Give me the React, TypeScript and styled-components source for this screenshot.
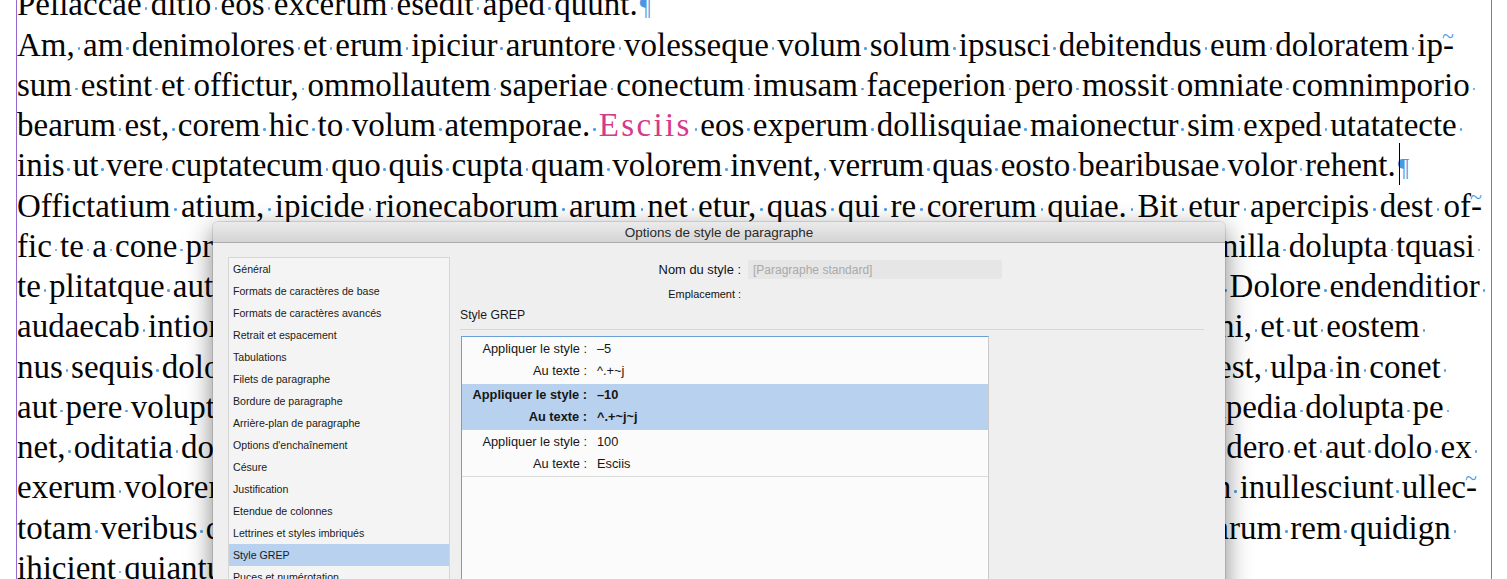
import React from "react";
import styled, { createGlobalStyle } from "styled-components";

const GlobalStyle = createGlobalStyle`
  html, body { margin: 0; padding: 0; background: #ffffff; overflow: hidden; }
  #root { width: 1507px; height: 579px; }
`;

const Page = styled.div`
  position: relative;
  width: 1507px;
  height: 579px;
  overflow: hidden;
  background: #ffffff;
`;

const Frame = styled.div`
  margin-left: 16px;
  width: 1474px;
  height: 579px;
  border-left: 1px solid #9569d0;
  border-right: 1px solid #9569d0;
  overflow: hidden;
`;

const Lines = styled.div`
  margin-top: -15.6px;
  font-family: "Liberation Serif", "Times New Roman", serif;
  font-size: 33px;
  line-height: 40.25px;
  color: #050505;
`;

const Line = styled.div<{ $w?: number }>`
  display: flex;
  height: 40.25px;
  width: ${(p) => (p.$w ? `${p.$w}px` : "100%")};
  white-space: nowrap;
`;

const Group = styled.div`
  display: flex;
  flex: none;
`;

const Filler = styled.div`
  flex: 1 1 auto;
`;

const Word = styled.span<{ $pink?: boolean }>`
  flex: none;
  color: ${(p) => (p.$pink ? "#d43a8c" : "inherit")};
  letter-spacing: ${(p) => (p.$pink ? "2.4px" : "normal")};
`;

const Sp = styled.span<{ $fixed?: boolean }>`
  position: relative;
  flex: ${(p) => (p.$fixed ? "0 0 8.25px" : "1 1 8.25px")};
  min-width: 3px;
  &::after {
    content: "";
    position: absolute;
    left: 50%;
    top: 22.8px;
    width: 2.6px;
    height: 2.6px;
    margin-left: -1.3px;
    border-radius: 50%;
    background: #4f9fe6;
  }
`;

const Hyphen = styled.span`
  position: relative;
  flex: none;
  &::after {
    content: "~";
    position: absolute;
    left: -1px;
    top: -9px;
    font-size: 22px;
    color: #4f9be4;
  }
`;

const Mark = styled.span<{ $caret?: boolean }>`
  position: relative;
  flex: none;
  color: #4a97e3;
  &::before {
    content: "";
    display: ${(p) => (p.$caret ? "block" : "none")};
    position: absolute;
    left: 3px;
    top: -2px;
    width: 1px;
    height: 42px;
    background: #000;
  }
`;

const Glyph = styled.span`
  font-size: 25px;
  line-height: 1;
  margin-left: 2px;
`;

/* ---------- dialog ---------- */

const Dialog = styled.div`
  position: absolute;
  left: 213px;
  top: 222px;
  width: 1012px;
  height: 420px;
  display: flex;
  flex-direction: column;
  background: #efefef;
  border-radius: 5px 5px 0 0;
  box-shadow: 0 8px 26px rgba(0, 0, 0, 0.5), 0 0 0 1px rgba(0, 0, 0, 0.1);
  font-family: "Liberation Sans", Arial, sans-serif;
  color: #1d1d1d;
`;

const TitleBar = styled.div`
  flex: none;
  height: 20px;
  display: flex;
  align-items: center;
  justify-content: center;
  border-bottom: 1px solid #ababab;
  border-radius: 5px 5px 0 0;
  background: linear-gradient(#ebebeb, #d4d4d4);
  font-size: 13.5px;
  color: #2a2a2a;
`;

const Body = styled.div`
  flex: 1;
  display: flex;
  gap: 10px;
  padding: 14px 21px 0 15px;
  min-height: 0;
`;

const Sidebar = styled.div`
  flex: none;
  width: 220px;
  border: 1px solid #d6d6d6;
  border-bottom: none;
  background: #f4f4f4;
`;

const NavItem = styled.div<{ $sel?: boolean }>`
  height: 22px;
  display: flex;
  align-items: center;
  padding-left: 4px;
  font-size: 10.6px;
  color: #1a1a1a;
  background: ${(p) => (p.$sel ? "#b7d1ee" : "transparent")};
`;

const Main = styled.div`
  flex: 1;
  display: flex;
  flex-direction: column;
  padding-top: 3px;
  min-width: 0;
`;

const FieldRow = styled.div<{ $gapTop?: number }>`
  display: grid;
  grid-template-columns: 281px 254px;
  column-gap: 7px;
  align-items: center;
  height: 19px;
  margin-top: ${(p) => p.$gapTop ?? 0}px;
`;

const FieldLabel = styled.div<{ $small?: boolean }>`
  text-align: right;
  font-size: ${(p) => (p.$small ? "10.9px" : "12.9px")};
  color: #111;
`;

const Input = styled.div`
  height: 19px;
  display: flex;
  align-items: center;
  padding-left: 5px;
  border-radius: 2px;
  background: #e6e6e6;
  font-size: 12px;
  color: #a9a9a9;
`;

const SectionTitle = styled.div`
  height: 20px;
  margin-top: 2px;
  display: flex;
  align-items: center;
  font-size: 12.2px;
  color: #1a1a1a;
`;

const Rule = styled.div`
  height: 1px;
  margin-top: 4px;
  background: #d8d8d8;
`;

const GrepList = styled.div`
  flex: 1;
  margin: 6px 0 0 1px;
  width: 526px;
  background: #fbfbfb;
  border-top: 1px solid #6b9fd8;
  border-left: 1px solid #6b9fd8;
  border-right: 1px solid #c9c9c9;
`;

const GrepRow = styled.div<{ $sel?: boolean; $last?: boolean }>`
  height: 46.5px;
  box-sizing: border-box;
  background: ${(p) => (p.$sel ? "#b7d1ee" : "transparent")};
  font-weight: ${(p) => (p.$sel ? 700 : 400)};
  border-bottom: ${(p) => (p.$last ? "1px solid #dadada" : "none")};
`;

const GrepLine = styled.div`
  display: grid;
  grid-template-columns: 125px auto;
  column-gap: 10px;
  align-items: center;
  height: 22px;
  font-size: 12.8px;
  color: #161616;
`;

const GrepLabel = styled.div`
  text-align: right;
  white-space: nowrap;
`;

/* ---------- data ---------- */

type FullLine = { w: number; text: string; caret?: boolean };
type SplitLine = { w?: number; left: string; right?: string };

const fullLines: FullLine[] = [
  { w: 634, text: "Pellaccae ditio eos excerum esedit aped quunt.¶" },
  { w: 1437, text: "Am, am denimolores et erum ipiciur aruntore volesseque volum solum ipsusci debitendus eum doloratem ip-~" },
  { w: 1461, text: "sum estint et offictur, ommollautem saperiae conectum imusam faceperion pero mossit omniate comnimporio " },
  { w: 1448, text: "bearum est, corem hic to volum atemporae. {Esciis} eos experum dollisquiae maionectur sim exped utatatecte " },
  { w: 1392, text: "inis ut vere cuptatecum quo quis cupta quam volorem invent, verrum quas eosto bearibusae volor rehent.¶", caret: true },
  { w: 1465, text: "Offictatium atium, ipicide rionecaborum arum net etur, quas qui re corerum quiae. Bit etur apercipis dest of-~" },
];

const splitLines: SplitLine[] = [
  { w: 1466, left: "fic te a cone preped quiatur", right: "volupta nilla dolupta tquasi " },
  { w: 1471, left: "te plitatque aut faccus", right: "ut Dolore endenditior " },
  { w: 1411, left: "audaecab intiorem", right: "omni, et ut eostem " },
  { w: 1432, left: "nus sequis dolorro", right: "quest, ulpa in conet " },
  { w: 1435, left: "aut pere voluptas", right: "expedia dolupta pe " },
  { w: 1463, left: "net, oditatia dolores", right: "quo dero et aut dolo ex " },
  { w: 1460, left: "exerum volorem", right: "quisin inullesciunt ullec-~" },
  { w: 1442, left: "totam veribus quam", right: "quarum rem quidign " },
  { left: "ihicient quiantur" },
];

const navItems = [
  "Général",
  "Formats de caractères de base",
  "Formats de caractères avancés",
  "Retrait et espacement",
  "Tabulations",
  "Filets de paragraphe",
  "Bordure de paragraphe",
  "Arrière-plan de paragraphe",
  "Options d'enchaînement",
  "Césure",
  "Justification",
  "Etendue de colonnes",
  "Lettrines et styles imbriqués",
  "Style GREP",
  "Puces et numérotation",
];

const grepRules = [
  { style: "–5", text: "^.+~j" },
  { style: "–10", text: "^.+~j~j", sel: true },
  { style: "100", text: "Esciis" },
];

/* ---------- rendering ---------- */

function renderToken(tok: string, key: string, caret?: boolean) {
  if (tok.endsWith("¶")) {
    return (
      <React.Fragment key={key}>
        <Word>{tok.slice(0, -1)}</Word>
        <Mark $caret={caret}>
          <Glyph>¶</Glyph>
        </Mark>
      </React.Fragment>
    );
  }
  if (tok.endsWith("-~")) {
    return (
      <React.Fragment key={key}>
        <Word>{tok.slice(0, -2)}</Word>
        <Hyphen>-</Hyphen>
      </React.Fragment>
    );
  }
  if (tok.startsWith("{") && tok.endsWith("}")) {
    return (
      <Word key={key} $pink>
        {tok.slice(1, -1)}
      </Word>
    );
  }
  return <Word key={key}>{tok}</Word>;
}

function renderWords(text: string, fixed: boolean, caret?: boolean) {
  const trailing = text.endsWith(" ");
  const toks = text.trim().split(" ");
  const out: React.ReactNode[] = [];
  toks.forEach((t, i) => {
    out.push(renderToken(t, `w${i}`, caret));
    if (i < toks.length - 1) out.push(<Sp key={`s${i}`} $fixed={fixed} />);
  });
  if (trailing) out.push(<Sp key="trail" $fixed />);
  return out;
}

export default function App() {
  return (
    <>
      <GlobalStyle />
      <Page>
        <Frame>
          <Lines>
            {fullLines.map((l, i) => (
              <Line key={`f${i}`} $w={l.w}>
                {renderWords(l.text, false, l.caret)}
              </Line>
            ))}
            {splitLines.map((l, i) => (
              <Line key={`s${i}`} $w={l.w}>
                <Group>{renderWords(l.left, true)}</Group>
                <Filler />
                {l.right && <Group>{renderWords(l.right, true)}</Group>}
              </Line>
            ))}
          </Lines>
        </Frame>

        <Dialog>
          <TitleBar>Options de style de paragraphe</TitleBar>
          <Body>
            <Sidebar>
              {navItems.map((n) => (
                <NavItem key={n} $sel={n === "Style GREP"}>
                  {n}
                </NavItem>
              ))}
            </Sidebar>
            <Main>
              <FieldRow>
                <FieldLabel>Nom du style :</FieldLabel>
                <Input>[Paragraphe standard]</Input>
              </FieldRow>
              <FieldRow $gapTop={5}>
                <FieldLabel $small>Emplacement :</FieldLabel>
                <span />
              </FieldRow>
              <SectionTitle>Style GREP</SectionTitle>
              <Rule />
              <GrepList>
                {grepRules.map((r, i) => (
                  <GrepRow key={i} $sel={r.sel} $last={i === grepRules.length - 1}>
                    <GrepLine>
                      <GrepLabel>Appliquer le style :</GrepLabel>
                      <span>{r.style}</span>
                    </GrepLine>
                    <GrepLine>
                      <GrepLabel>Au texte :</GrepLabel>
                      <span>{r.text}</span>
                    </GrepLine>
                  </GrepRow>
                ))}
              </GrepList>
            </Main>
          </Body>
        </Dialog>
      </Page>
    </>
  );
}
